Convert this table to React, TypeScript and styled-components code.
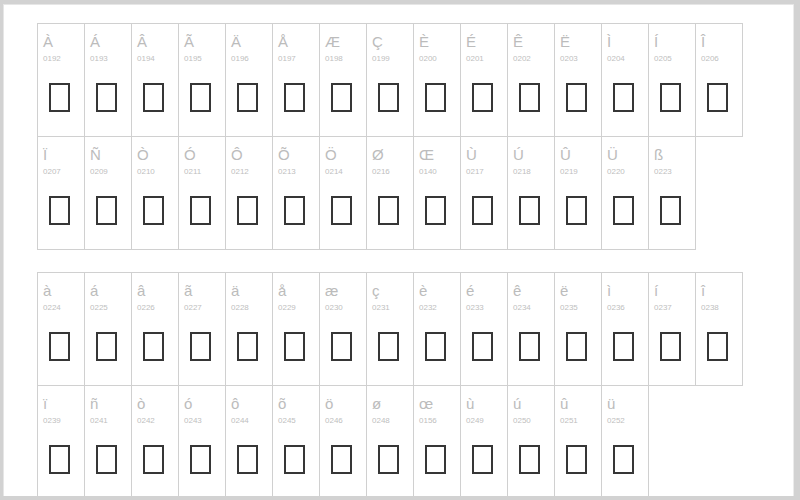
import React, { FC } from "react";
import styled, { createGlobalStyle } from "styled-components";

const GlobalStyle = createGlobalStyle`
  html, body {
    margin: 0;
    padding: 0;
    background: #ffffff;
  }
  body {
    font-family: "Liberation Sans", Arial, sans-serif;
  }
`;

const Frame = styled.div`
  width: 800px;
  height: 500px;
  box-sizing: border-box;
  overflow: hidden;
  background: #ffffff;
  border-style: solid;
  border-color: #d2d2d2;
  border-width: 4px 6px 4px 3px;
  box-shadow: inset 1px 1px 0 #e6e6e6, inset -1px 0 0 #ebebeb;
  padding: 19px 0 0 34px;
  display: flex;
  flex-direction: column;
  gap: 23px;
`;

const Block = styled.div`
  display: grid;
  grid-template-columns: repeat(15, 47px);
  grid-auto-rows: 113px;
`;

const Cell = styled.div`
  margin: 0 -1px -1px 0;
  border: 1px solid #d0d0d0;
  box-sizing: border-box;
  padding: 10px 0 0 5px;
  display: flex;
  flex-direction: column;
  align-items: flex-start;
`;

const Glyph = styled.span`
  font-size: 15px;
  line-height: 15px;
  color: #bcbcbc;
  height: 15px;
`;

const Code = styled.span`
  margin-top: 5px;
  font-size: 8px;
  line-height: 10px;
  color: #c0c0c0;
`;

const Tofu = styled.span`
  margin: 19px 0 0 6px;
  width: 21px;
  height: 29px;
  box-sizing: border-box;
  border: 2px solid #363636;
`;

type Entry = [string, string];

const upper: Entry[][] = [
  [
    ["À", "0192"], ["Á", "0193"], ["Â", "0194"], ["Ã", "0195"], ["Ä", "0196"],
    ["Å", "0197"], ["Æ", "0198"], ["Ç", "0199"], ["È", "0200"], ["É", "0201"],
    ["Ê", "0202"], ["Ë", "0203"], ["Ì", "0204"], ["Í", "0205"], ["Î", "0206"],
  ],
  [
    ["Ï", "0207"], ["Ñ", "0209"], ["Ò", "0210"], ["Ó", "0211"], ["Ô", "0212"],
    ["Õ", "0213"], ["Ö", "0214"], ["Ø", "0216"], ["Œ", "0140"], ["Ù", "0217"],
    ["Ú", "0218"], ["Û", "0219"], ["Ü", "0220"], ["ß", "0223"],
  ],
];

const lower: Entry[][] = [
  [
    ["à", "0224"], ["á", "0225"], ["â", "0226"], ["ã", "0227"], ["ä", "0228"],
    ["å", "0229"], ["æ", "0230"], ["ç", "0231"], ["è", "0232"], ["é", "0233"],
    ["ê", "0234"], ["ë", "0235"], ["ì", "0236"], ["í", "0237"], ["î", "0238"],
  ],
  [
    ["ï", "0239"], ["ñ", "0241"], ["ò", "0242"], ["ó", "0243"], ["ô", "0244"],
    ["õ", "0245"], ["ö", "0246"], ["ø", "0248"], ["œ", "0156"], ["ù", "0249"],
    ["ú", "0250"], ["û", "0251"], ["ü", "0252"],
  ],
];

const CharBlock: FC<{ rows: Entry[][] }> = ({ rows }) => (
  <Block>
    {rows.map((row, r) => (
      <React.Fragment key={r}>
        {row.map(([ch, code]) => (
          <Cell key={code} style={{ gridRow: r + 1 }}>
            <Glyph>{ch}</Glyph>
            <Code>{code}</Code>
            <Tofu />
          </Cell>
        ))}
      </React.Fragment>
    ))}
  </Block>
);

const App: FC = () => (
  <>
    <GlobalStyle />
    <Frame>
      <CharBlock rows={upper} />
      <CharBlock rows={lower} />
    </Frame>
  </>
);

export default App;
